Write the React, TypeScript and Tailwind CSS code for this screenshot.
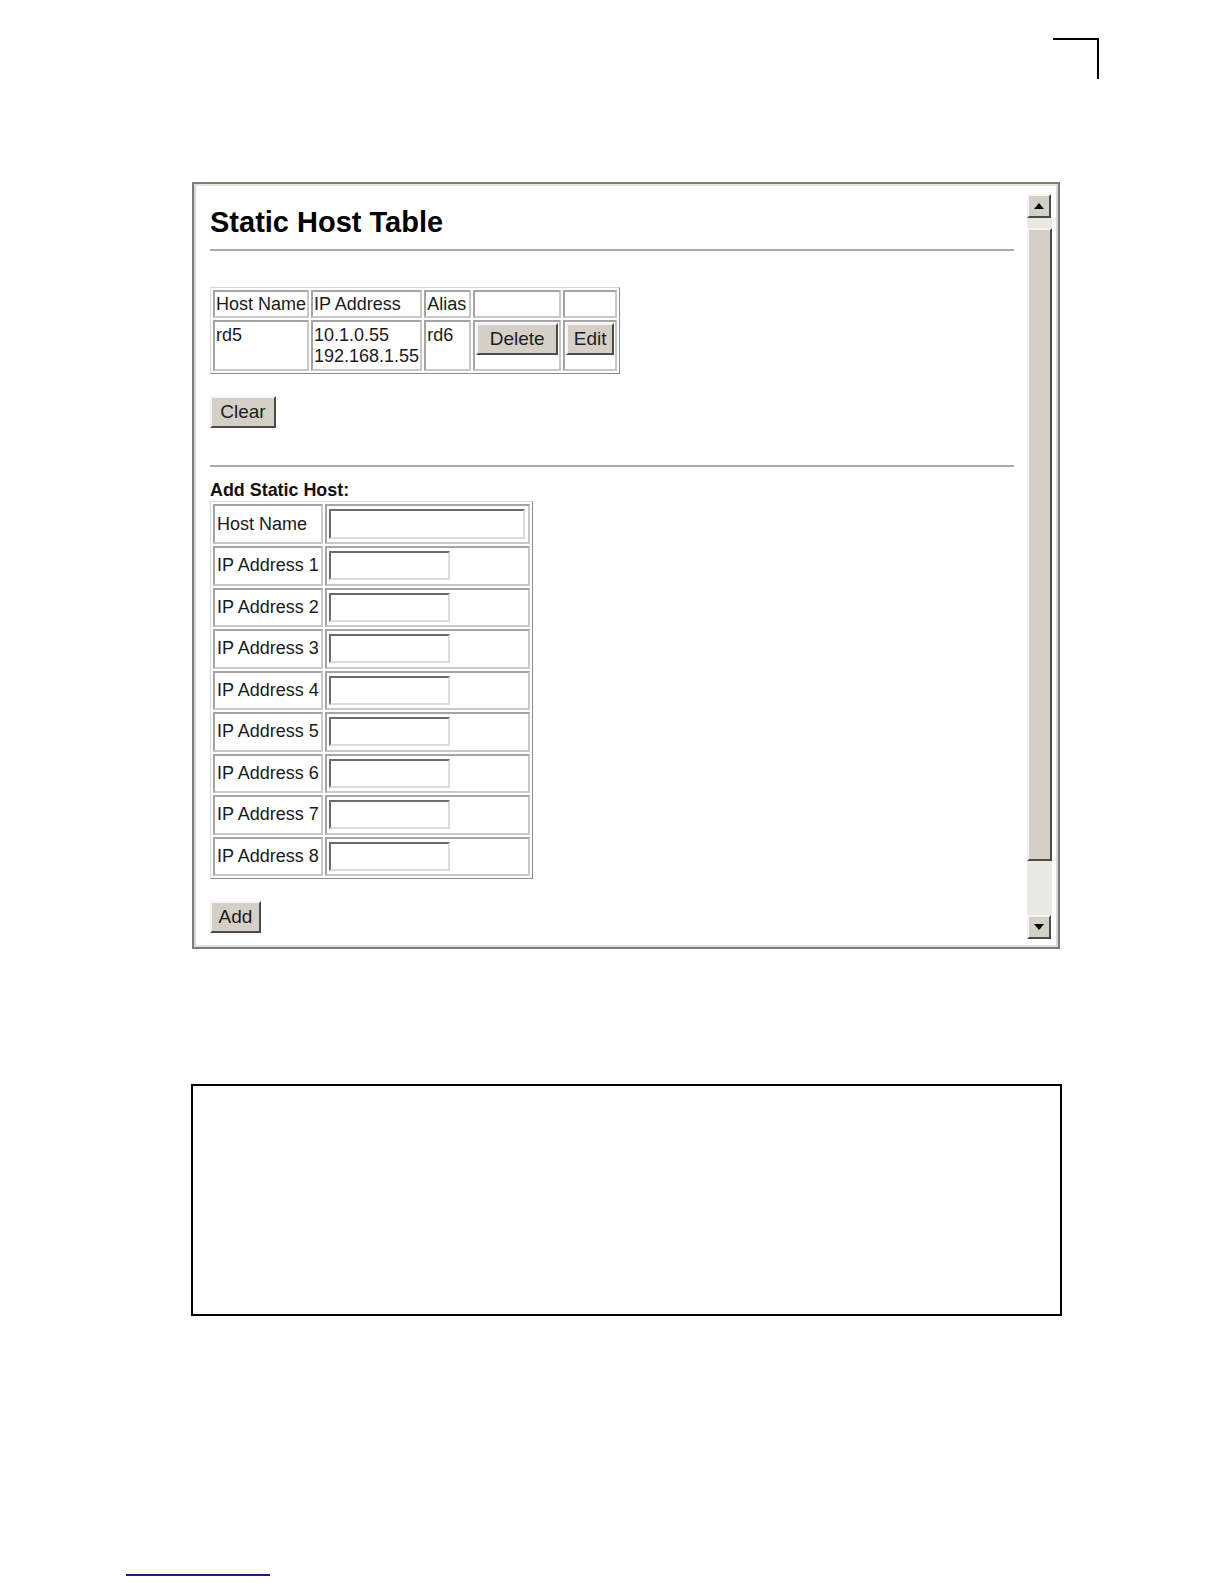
const sans = "font-['Liberation_Sans',Arial,sans-serif]";

const raised =
  "bg-[#d4d0c8] border-2 border-t-[#f4f4f0] border-l-[#f4f4f0] border-b-[#4a4a4a] border-r-[#4a4a4a]";

function Button({ label, w }: { label: string; w: string }) {
  return (
    <button
      className={`${w} h-[32px] ${raised} text-[19px] leading-[22px] text-[#1c1c1c] flex items-center justify-center`}
    >
      {label}
    </button>
  );
}

function TextBox({ w, h }: { w: string; h: string }) {
  return (
    <div
      className={`${w} ${h} bg-white border-2 border-t-[#6a6a6a] border-l-[#6a6a6a] border-b-[#dcdcdc] border-r-[#dcdcdc]`}
    />
  );
}

const cell =
  "border-2 border-t-[#a4a4a4] border-l-[#a4a4a4] border-b-[#c8c8c8] border-r-[#c8c8c8] p-0";

const tableBox =
  "border border-t-[#d8d8d8] border-l-[#d8d8d8] border-b-[#8c8c8c] border-r-[#8c8c8c] border-separate [border-spacing:2.5px] text-[18px] leading-[21px]";

function Arrow({ up }: { up: boolean }) {
  return (
    <div className={`w-[24px] h-[24px] ${raised} flex items-center justify-center`}>
      <svg width="10" height="6" viewBox="0 0 10 6">
        {up ? <path d="M5 0 L10 6 L0 6 Z" fill="#000" /> : <path d="M0 0 L10 0 L5 6 Z" fill="#000" />}
      </svg>
    </div>
  );
}

export default function App() {
  const ips = [1, 2, 3, 4, 5, 6, 7, 8];
  return (
    <div className={`w-[1224px] h-[1584px] bg-white ${sans} text-[#1a1a1a]`}>
      {/* corner crop mark */}
      <div className="pt-[38px] flex justify-end pr-[125px]">
        <div className="w-[46px] h-[41px] border-t-2 border-r-2 border-black" />
      </div>

      {/* screenshot frame */}
      <div className="mt-[103px] ml-[192px] w-[868px] h-[767px] border-2 border-[#7c7c7c]">
        <div className="h-full border-2 border-t-[#e6e6d4] border-l-[#d8d8d8] border-b-[#e0e0e0] border-r-[#d8d8d8] flex overflow-hidden">
          <div className="flex-1 pl-[14px] pr-[13px] pt-[20px]">
            <h1 className="text-[29px] leading-[32px] font-bold text-black">Static Host Table</h1>
            <div className="mt-[10.5px] h-[2px] bg-[#a8a8a8]" />

            <table className={`mt-[36.5px] ${tableBox}`}>
              <tbody>
                <tr className="h-[28px]">
                  <td className={`${cell} w-[96px] px-[1px] whitespace-nowrap`}>Host Name</td>
                  <td className={`${cell} w-[109px] px-[1px] whitespace-nowrap`}>IP Address</td>
                  <td className={`${cell} w-[47px] px-[1px]`}>Alias</td>
                  <td className={`${cell} w-[87.5px]`} />
                  <td className={`${cell} w-[54px]`} />
                </tr>
                <tr className="h-[51px]">
                  <td className={`${cell} align-top px-[1px] pt-[3px]`}>rd5</td>
                  <td className={`${cell} align-top px-[1px] pt-[3px] whitespace-nowrap`}>
                    10.1.0.55
                    <br />
                    192.168.1.55
                  </td>
                  <td className={`${cell} align-top px-[1px] pt-[3px]`}>rd6</td>
                  <td className={`${cell} align-top pl-[1px] pt-[1px]`}>
                    <Button label="Delete" w="w-[82px]" />
                  </td>
                  <td className={`${cell} align-top pl-[1.5px] pt-[1px]`}>
                    <Button label="Edit" w="w-[48px]" />
                  </td>
                </tr>
              </tbody>
            </table>

            <div className="mt-[22px]">
              <Button label="Clear" w="w-[66px]" />
            </div>

            <div className="mt-[37px] h-[2px] bg-[#a8a8a8]" />
            <div className="mt-[13px] text-[17.9px] leading-[21px] font-bold text-[#111]">Add Static Host:</div>

            <table className={tableBox}>
              <tbody>
                <tr className="h-[40px]">
                  <td className={`${cell} w-[109px] px-[2px] whitespace-nowrap`}>Host Name</td>
                  <td className={`${cell} w-[205px] px-[2px]`}>
                    <TextBox w="w-[196px]" h="h-[30px]" />
                  </td>
                </tr>
                {ips.map((n) => (
                  <tr key={n} className="h-[39.5px]">
                    <td className={`${cell} px-[2px] whitespace-nowrap`}>IP Address {n}</td>
                    <td className={`${cell} px-[2px]`}>
                      <TextBox w="w-[121px]" h="h-[29px]" />
                    </td>
                  </tr>
                ))}
              </tbody>
            </table>

            <div className="mt-[22px]">
              <Button label="Add" w="w-[51px]" />
            </div>
          </div>

          {/* scrollbar */}
          <div className="w-[25px] mr-[4px] pt-[8px] pb-[6px] flex flex-col">
            <Arrow up />
            <div className="flex-1 bg-[#eae8e2] flex flex-col pt-[10px] pb-[54px] w-[25px]">
              <div className={`flex-1 ${raised}`} />
            </div>
            <Arrow up={false} />
          </div>
        </div>
      </div>

      {/* empty bordered box */}
      <div className="mt-[135px] ml-[191px] w-[871px] h-[232px] border-2 border-black" />

      {/* footer rule */}
      <div className="mt-[258px] ml-[126px] w-[144px] h-[2px] bg-[#1c1c8c]" />
    </div>
  );
}
